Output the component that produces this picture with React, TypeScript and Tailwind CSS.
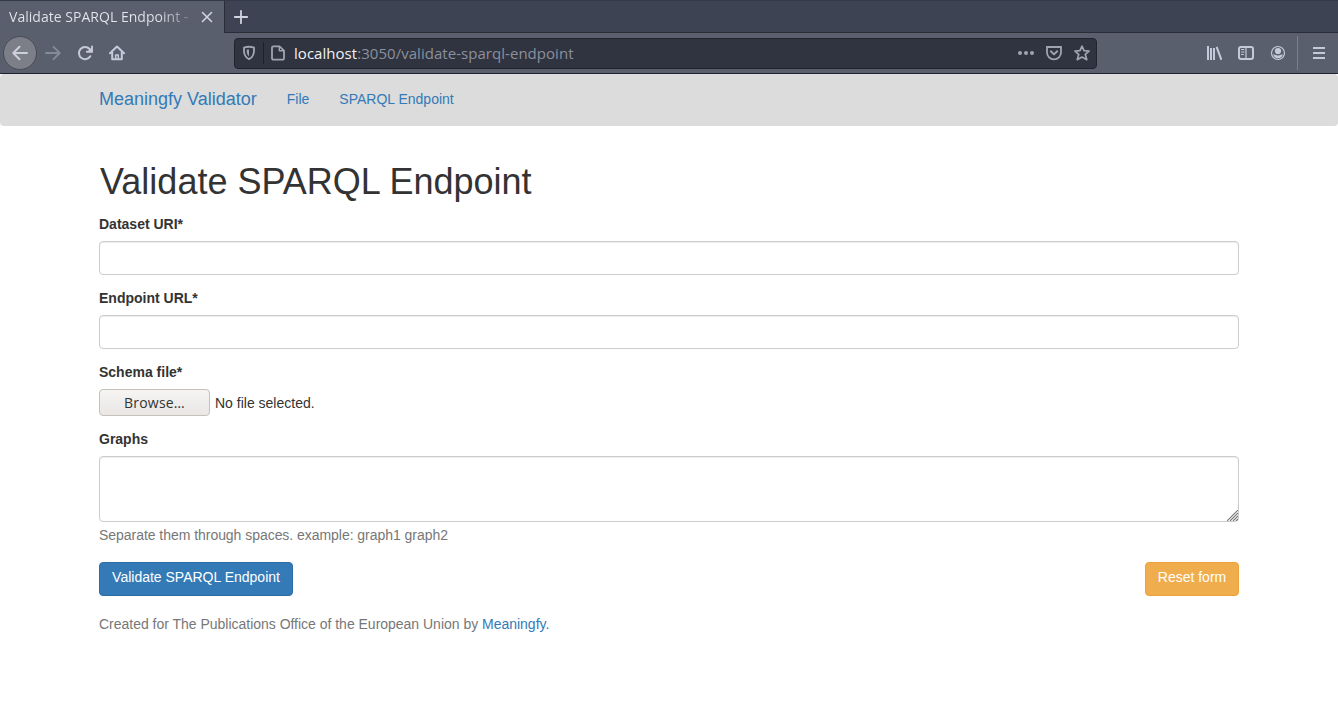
import type { ReactNode } from "react";

const chromeFont = "font-['Open_Sans','Noto_Sans',sans-serif]";

function Icon({ children, className = "" }: { children: ReactNode; className?: string }) {
  return (
    <svg
      viewBox="0 0 16 16"
      className={`size-4 shrink-0 ${className}`}
      fill="none"
      stroke="currentColor"
      strokeWidth="2"
      strokeLinecap="round"
      strokeLinejoin="round"
    >
      {children}
    </svg>
  );
}

function TabStrip() {
  return (
    <div className="flex h-[33px] border-t border-[#343947] bg-[#3e4353]">
      <div className="flex w-[225px] items-center border-r border-[#292d38] bg-[#5a5f6d] pl-[9px]">
        <span className="w-[186px] whitespace-nowrap bg-linear-to-r from-[#e4e7ee] from-80% to-[#e4e7ee]/15 bg-clip-text text-[14px] tracking-[0.03px] text-transparent">
          Validate SPARQL Endpoint -
        </span>
        <Icon className="ml-1 text-[#d0d4df]">
          <path d="M3.5 3.5l9 9M12.5 3.5l-9 9" strokeWidth="1.6" />
        </Icon>
      </div>
      <div className="flex flex-1 items-center border-b border-[#292d38] pl-2 text-[#d0d4df]">
        <Icon>
          <path d="M8 1.8v12.4M1.8 8h12.4" strokeWidth="1.8" />
        </Icon>
      </div>
    </div>
  );
}

function AddressBar() {
  return (
    <div className="ml-[109px] flex h-[31px] w-[863px] items-center rounded-[4px] border border-[#20242d] bg-[#2f3440] text-[#a0a4af]">
      <Icon className="ml-[6px]">
        <path d="M8 1.8c1.8 0 3.6.3 5 .8.5 5.8-1 9.8-5 11.6C4 12.4 2.5 8.4 3 2.6c1.4-.5 3.2-.8 5-.8z" strokeWidth="1.9" />
        <path d="M8 4.500c-.9 0-1.600.1-2.400.3C5.600 8 6.200 10 8 11.400z" fill="currentColor" stroke="none" />
      </Icon>
      <div className="ml-[6px] h-[22px] w-px bg-[#1d2129]" />
      <Icon className="ml-[6px]">
        <path d="M3.500 1.300H9.500L14 5.600V13.200a1.500 1.500 0 0 1-1.500 1.500H3.500a1.500 1.500 0 0 1-1.500-1.500V2.800a1.500 1.500 0 0 1 1.500-1.500z" strokeWidth="1.800" />
        <path d="M9.300 1.500v4.200h4.500" strokeWidth="1.400" />
      </Icon>
      <span className="ml-[8px] flex-1 whitespace-nowrap text-[15px] tracking-[0.04px] text-[#8c909b]">
        <span className="text-[#f1f2f5]">localhost</span>:3050/validate-sparql-endpoint
      </span>
      <Icon>
        <g fill="currentColor" stroke="none">
          <circle cx="2" cy="8" r="2" />
          <circle cx="8" cy="8" r="2" />
          <circle cx="14" cy="8" r="2" />
        </g>
      </Icon>
      <Icon className="ml-3">
        <path d="M1 2h14v5.500a7 6.800 0 0 1-14 0z" strokeWidth="1.800" strokeLinejoin="miter" />
        <path d="M4.800 6.300L8 9.400l3.200-3.100" strokeWidth="1.900" />
      </Icon>
      <Icon className="ml-3 mr-[6px]">
        <path d="M8 1.200l2 4.500 5 .4-3.700 3.300 1.500 5.300L8 12l-4.800 2.700 1.500-5.300L1 6.100l5-.4z" strokeWidth="1.700" />
      </Icon>
    </div>
  );
}

function Toolbar() {
  return (
    <div className="flex h-[41px] items-center border-b border-[#20242e] bg-[#5a5f6d] text-[#c5cada]">
      <div className="ml-[3px] flex size-[34px] items-center justify-center rounded-full border border-[#484c57] bg-[#7c7f88] text-[#ccd0dd]">
        <Icon>
          <path d="M15 8H1.500M7.500 1.800L1.300 8l6.200 6.200" />
        </Icon>
      </div>
      <Icon className="ml-2 text-[#868b99]">
        <path d="M1 8h13.500M8.500 1.800L14.700 8l-6.200 6.200" strokeWidth="1.800" />
      </Icon>
      <Icon className="ml-4">
        <path d="M12.600 4A6.100 6.100 0 1 0 13.300 11.200" />
        <path d="M15 1.500v5.300H9.800" strokeLinejoin="miter" strokeWidth="1.900" />
        <path d="M15 2v5h-5z" fill="currentColor" stroke="none" />
      </Icon>
      <Icon className="ml-4">
        <path d="M1 8.200l7-6.700 7 6.700M3.200 7.500v6.700h9.600V7.500" />
        <path d="M6.700 14V10h2.600V14" strokeWidth="1.500" />
      </Icon>
      <AddressBar />
      <div className="ml-[109px] flex gap-4">
        <Icon>
          <path d="M2 1v14M5 3v12M8 3v12M10.600 1.800L15.400 14.800" strokeLinecap="butt" />
        </Icon>
        <Icon>
          <rect x="1" y="2" width="14" height="12" rx="2" />
          <path d="M8 2v12" strokeWidth="1.200" />
          <path d="M3.500 4.500h2.500M3.500 7h2.500M3.500 9.500h2" strokeWidth="1" />
        </Icon>
        <Icon>
          <circle cx="8" cy="8" r="6.500" strokeWidth="1.200" />
          <g fill="currentColor" stroke="none">
            <circle cx="8" cy="6" r="3.100" />
            <path d="M3.200 9c1 .4 2.200 1.400 4.800 1.400s3.800-1 4.800-1.400C12.500 12 10.500 13.200 8 13.200S3.500 12 3.200 9z" />
          </g>
        </Icon>
      </div>
      <div className="ml-[11px] h-[34px] w-px bg-[#7c808c]" />
      <Icon className="ml-[13px]">
        <path d="M2 3h12M2 8h12M2 13h12" strokeLinecap="butt" />
      </Icon>
    </div>
  );
}

const fieldClass =
  "block w-full rounded-[4px] border border-[#ccc] bg-white px-3 shadow-[inset_0_1px_1px_rgba(0,0,0,0.075)] outline-none";

function Label({ htmlFor, children }: { htmlFor: string; children: ReactNode }) {
  return (
    <label htmlFor={htmlFor} className="mb-[5px] block h-5 font-bold leading-[17px]">
      {children}
    </label>
  );
}

export default function App() {
  return (
    <div className="min-h-[706px] bg-white font-['Liberation_Sans',Arial,sans-serif] text-[14px] leading-5 text-[#333]">
      <header className={chromeFont}>
        <TabStrip />
        <Toolbar />
      </header>
      <nav className="h-[52px] rounded-[4px] bg-[#dcdcdc] text-[#337ab7]">
        <div className="mx-auto flex h-[50px] w-[1140px] items-center">
          <a className="text-[18px]">Meaningfy Validator</a>
          <a className="ml-[30px]">File</a>
          <a className="ml-[30px]">SPARQL Endpoint</a>
        </div>
      </nav>
      <main className="mx-auto w-[1140px] pt-[36px]">
        <h1 className="mb-[13.6px] h-[40px] pl-px text-[36px] leading-10">Validate SPARQL Endpoint</h1>
        <form>
          <div className="mb-[15px]">
            <Label htmlFor="dataset">Dataset URI*</Label>
            <input id="dataset" className={`${fieldClass} h-[34px]`} />
          </div>
          <div className="mb-[15px]">
            <Label htmlFor="endpoint">Endpoint URL*</Label>
            <input id="endpoint" className={`${fieldClass} h-[34px]`} />
          </div>
          <div className="mb-[15px]">
            <Label htmlFor="schema">Schema file*</Label>
            <div className="flex h-[27px] items-center">
              <button
                id="schema"
                type="button"
                className={`h-[27px] w-[111px] rounded-[4px] border border-[#c4c0bc] bg-linear-to-b from-[#f6f5f4] to-[#e9e6e4] pt-px text-[14px] leading-5 tracking-[0.2px] ${chromeFont}`}
              >
                Browse…
              </button>
              <span className="ml-[5px] pt-px">No file selected.</span>
            </div>
          </div>
          <div className="mb-[15px]">
            <Label htmlFor="graphs">Graphs</Label>
            <div className="relative">
              <textarea id="graphs" className={`${fieldClass} h-[66px] resize-none`} />
              <svg
                viewBox="0 0 11 11"
                className="absolute bottom-px right-px size-[11px]"
                stroke="#777"
                strokeWidth="1.1"
              >
                <path d="M0 11L11 0M3 11L11 3M6 11L11 6M9 11L11 9" />
              </svg>
            </div>
            <p className="mt-[5px] h-5 leading-[17px] tracking-[-0.04px] text-[#777]">
              Separate them through spaces. example: graph1 graph2
            </p>
          </div>
          <div className="flex justify-between text-white">
            <button
              type="button"
              className="h-[34px] w-[194px] rounded-[4px] border border-[#2e6da4] bg-[#337ab7] pb-[3px]"
            >
              Validate SPARQL Endpoint
            </button>
            <button
              type="button"
              className="h-[34px] w-[94px] rounded-[4px] border border-[#eea236] bg-[#f0ad4e] pb-[3px]"
            >
              Reset form
            </button>
          </div>
        </form>
        <footer className="mt-5 leading-[17px] tracking-[-0.015px] text-[#777]">
          Created for The Publications Office of the European Union by{" "}
          <a className="text-[#337ab7]">Meaningfy.</a>
        </footer>
      </main>
    </div>
  );
}
